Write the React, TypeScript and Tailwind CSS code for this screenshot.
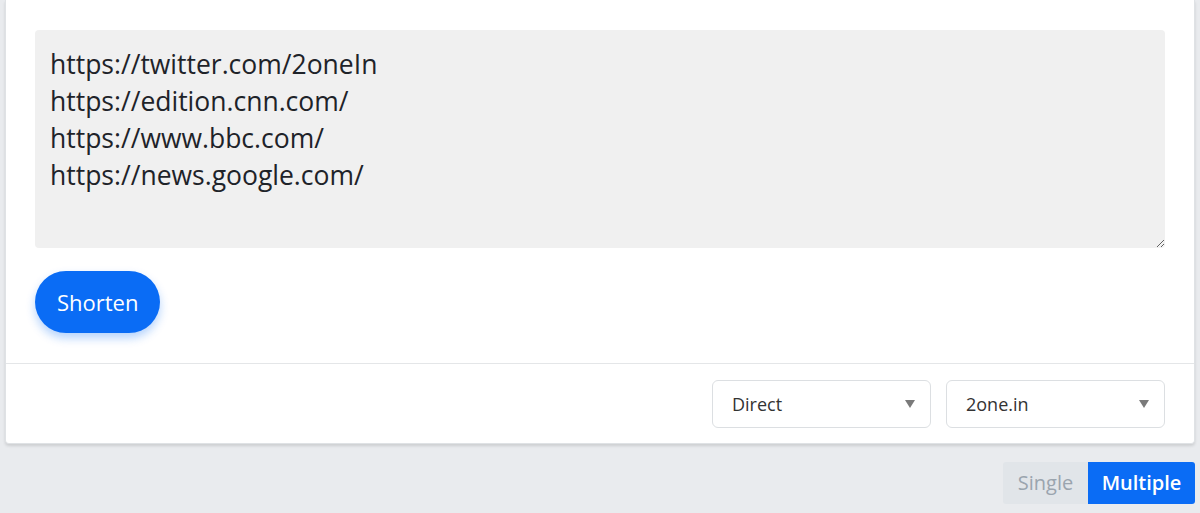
import React from "react";

export default function App() {
  const urls = [
    "https://twitter.com/2oneIn",
    "https://edition.cnn.com/",
    "https://www.bbc.com/",
    "https://news.google.com/",
  ].join("\n");

  return (
    <div
      className="w-[1200px] h-[513px] bg-[#e9ebee] px-[5px] overflow-hidden"
      style={{ fontFamily: '"Open Sans", "Noto Sans", sans-serif' }}
    >
      <div className="bg-white rounded-b-[4px] border-x border-b border-[#dfe2e5] shadow-[0_2px_3px_rgba(0,0,0,0.12)]">
        <div className="px-[29px] pt-[30px] pb-[30px]">
          <textarea
            defaultValue={urls}
            className="block w-full h-[218px] bg-[#f0f0f0] rounded-[4px] px-[15px] pt-[16px] text-[26.5px] leading-[36.9px] text-[#1e2329] outline-none"
            style={{ fontFamily: '"Open Sans", "Noto Sans", sans-serif' }}
          />
          <button className="mt-[23px] h-[62px] px-[22px] rounded-full bg-[#0a6cf5] text-white text-[22px] shadow-[0_5px_10px_rgba(10,108,245,0.3)]">
            Shorten
          </button>
        </div>
        <div className="border-t border-[#e4e6e8] flex justify-end gap-[15px] pr-[29px] pt-[16px] pb-[15px]">
          {["Direct", "2one.in"].map((t) => (
            <div
              key={t}
              className="w-[219px] h-[48px] border border-[#dcdfe2] rounded-[6px] flex items-center justify-between pl-[19px] pr-[15px] text-[18px] text-[#333]"
            >
              <span>{t}</span>
              <svg width="10" height="8" viewBox="0 0 10 8">
                <path d="M0 0 H10 L5 8 Z" fill="#7a7a7a" />
              </svg>
            </div>
          ))}
        </div>
      </div>
      <div className="flex justify-end mt-[18px]">
        <div className="flex h-[42px]">
          <div className="w-[85px] bg-[#e1e5e9] text-[#9aa4ae] text-[20px] flex items-center justify-center rounded-l-[3px]">
            Single
          </div>
          <div className="w-[107px] bg-[#0a6cf5] text-white text-[20px] font-semibold flex items-center justify-center rounded-r-[3px]">
            Multiple
          </div>
        </div>
      </div>
    </div>
  );
}
